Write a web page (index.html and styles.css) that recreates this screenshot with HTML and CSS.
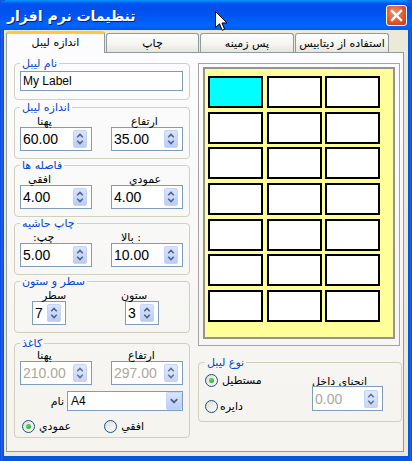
FILE: index.html
```html
<!DOCTYPE html>
<html lang="fa">
<head>
<meta charset="utf-8">
<title>تنظیمات نرم افزار</title>
<link rel="stylesheet" href="styles.css">
</head>
<body>
<div class="window">
  <div class="titlebar">
    <span class="title">تنظیمات نرم افزار</span>
    <span class="close">
      <svg width="21" height="21" viewBox="0 0 21 21"><path d="M6 6 L15 15 M15 6 L6 15" stroke="#fff" stroke-width="2.4" stroke-linecap="square"/></svg>
    </span>
  </div>
  <div class="client">
    <div class="tabs">
      <div class="tab active">اندازه لیبل</div>
      <div class="tab t2">چاپ</div>
      <div class="tab t3">پس زمینه</div>
      <div class="tab t4">استفاده از دیتابیس</div>
    </div>
    <div class="panel">
      <div class="left">
        <fieldset class="grp g-name">
          <legend>نام لیبل</legend>
          <div class="textbox">My Label</div>
        </fieldset>

        <fieldset class="grp g-spin g2">
          <legend>اندازه لیبل</legend>
          <div class="pair">
            <div class="field"><div class="lab l-w">پهنا</div>
              <div class="spin"><span class="val">60.00</span><span class="spinbtn"><svg width="13" height="18" viewBox="0 0 13 18"><path d="M3.5 7 L6.5 4 L9.5 7 M3.5 11 L6.5 14 L9.5 11" fill="none" stroke="#4D6185" stroke-width="1.6"/></svg></span></div></div>
            <div class="field"><div class="lab l-h">ارتفاع</div>
              <div class="spin"><span class="val">35.00</span><span class="spinbtn"><svg width="13" height="18" viewBox="0 0 13 18"><path d="M3.5 7 L6.5 4 L9.5 7 M3.5 11 L6.5 14 L9.5 11" fill="none" stroke="#4D6185" stroke-width="1.6"/></svg></span></div></div>
          </div>
        </fieldset>

        <fieldset class="grp g-spin g3">
          <legend>فاصله ها</legend>
          <div class="pair">
            <div class="field"><div class="lab l-hz">افقي</div>
              <div class="spin"><span class="val">4.00</span><span class="spinbtn"><svg width="13" height="18" viewBox="0 0 13 18"><path d="M3.5 7 L6.5 4 L9.5 7 M3.5 11 L6.5 14 L9.5 11" fill="none" stroke="#4D6185" stroke-width="1.6"/></svg></span></div></div>
            <div class="field"><div class="lab l-vt">عمودي</div>
              <div class="spin"><span class="val">4.00</span><span class="spinbtn"><svg width="13" height="18" viewBox="0 0 13 18"><path d="M3.5 7 L6.5 4 L9.5 7 M3.5 11 L6.5 14 L9.5 11" fill="none" stroke="#4D6185" stroke-width="1.6"/></svg></span></div></div>
          </div>
        </fieldset>

        <fieldset class="grp g-spin g4">
          <legend>چاپ حاشیه</legend>
          <div class="pair">
            <div class="field"><div class="lab l-lf">:چپ</div>
              <div class="spin"><span class="val">5.00</span><span class="spinbtn"><svg width="13" height="18" viewBox="0 0 13 18"><path d="M3.5 7 L6.5 4 L9.5 7 M3.5 11 L6.5 14 L9.5 11" fill="none" stroke="#4D6185" stroke-width="1.6"/></svg></span></div></div>
            <div class="field"><div class="lab l-tp">بالا :</div>
              <div class="spin"><span class="val">10.00</span><span class="spinbtn"><svg width="13" height="18" viewBox="0 0 13 18"><path d="M3.5 7 L6.5 4 L9.5 7 M3.5 11 L6.5 14 L9.5 11" fill="none" stroke="#4D6185" stroke-width="1.6"/></svg></span></div></div>
          </div>
        </fieldset>

        <fieldset class="grp g-spin g5">
          <legend>سطر و ستون</legend>
          <div class="pair">
            <div class="field f-row"><div class="lab l-rw">سطر</div>
              <div class="spin small"><span class="val">7</span><span class="spinbtn"><svg width="13" height="18" viewBox="0 0 13 18"><path d="M3.5 7 L6.5 4 L9.5 7 M3.5 11 L6.5 14 L9.5 11" fill="none" stroke="#4D6185" stroke-width="1.6"/></svg></span></div></div>
            <div class="field f-col"><div class="lab l-cl">ستون</div>
              <div class="spin small"><span class="val">3</span><span class="spinbtn"><svg width="13" height="18" viewBox="0 0 13 18"><path d="M3.5 7 L6.5 4 L9.5 7 M3.5 11 L6.5 14 L9.5 11" fill="none" stroke="#4D6185" stroke-width="1.6"/></svg></span></div></div>
          </div>
        </fieldset>

        <fieldset class="grp g6">
          <legend>کاغذ</legend>
          <div class="pair">
            <div class="field"><div class="lab l-pw">پهنا</div>
              <div class="spin disabled"><span class="val">210.00</span><span class="spinbtn"><svg width="13" height="18" viewBox="0 0 13 18"><path d="M3.5 7 L6.5 4 L9.5 7 M3.5 11 L6.5 14 L9.5 11" fill="none" stroke="#5E7196" stroke-width="1.6"/></svg></span></div></div>
            <div class="field"><div class="lab l-ph">ارتفاع</div>
              <div class="spin disabled"><span class="val">297.00</span><span class="spinbtn"><svg width="13" height="18" viewBox="0 0 13 18"><path d="M3.5 7 L6.5 4 L9.5 7 M3.5 11 L6.5 14 L9.5 11" fill="none" stroke="#5E7196" stroke-width="1.6"/></svg></span></div></div>
          </div>
          <div class="namerow">
            <span class="namelab">نام</span>
            <div class="combo"><span class="cval">A4</span><span class="ddbtn"><svg width="15" height="18" viewBox="0 0 15 18"><path d="M4 7 L7.5 10.5 L11 7" fill="none" stroke="#4D6185" stroke-width="2"/></svg></span></div>
          </div>
          <div class="radios">
            <label class="radio r-port"><span class="dot checked"></span><span>عمودي</span></label>
            <label class="radio r-land"><span class="dot"></span><span>افقي</span></label>
          </div>
        </fieldset>
      </div>

      <div class="right">
        <div class="preview">
          <div class="sheet">
            <div class="cell sel"></div><div class="cell"></div><div class="cell"></div>
            <div class="cell"></div><div class="cell"></div><div class="cell"></div>
            <div class="cell"></div><div class="cell"></div><div class="cell"></div>
            <div class="cell"></div><div class="cell"></div><div class="cell"></div>
            <div class="cell"></div><div class="cell"></div><div class="cell"></div>
            <div class="cell"></div><div class="cell"></div><div class="cell"></div>
            <div class="cell"></div><div class="cell"></div><div class="cell"></div>
          </div>
        </div>
        <fieldset class="grp g-type">
          <legend>نوع لیبل</legend>
          <div class="typebody">
            <div class="typeradios">
              <label class="radio r-rect"><span class="dot checked"></span><span>مستطيل</span></label>
              <label class="radio r-circ"><span class="dot"></span><span>دايره</span></label>
            </div>
            <div class="curve">
              <div class="lab l-cv">انحناي داخل</div>
              <div class="spin disabled curvebox"><span class="val">0.00</span><span class="spinbtn"><svg width="13" height="18" viewBox="0 0 13 18"><path d="M3.5 7 L6.5 4 L9.5 7 M3.5 11 L6.5 14 L9.5 11" fill="none" stroke="#5E7196" stroke-width="1.6"/></svg></span></div>
            </div>
          </div>
        </fieldset>
      </div>
    </div>
  </div>
  <svg class="cursor" width="13" height="21" viewBox="0 0 13 21"><path d="M0.5 0.5 L0.5 16.5 L4.5 12.8 L7.2 19.3 L9.6 18.3 L7 12 L12 12 Z" fill="#fff" stroke="#000" stroke-width="1"/></svg>
</div>
</body>
</html>
```
FILE: styles.css
```css
* { box-sizing: border-box; }
html, body { margin: 0; padding: 0; background: #fff; }
body {
  font-family: "DejaVu Sans", sans-serif;
  font-size: 11px;
  color: #000;
}

.window {
  position: relative;
  width: 412px;
  height: 461px;
  background: linear-gradient(90deg, #0831D9 0, #166AEE 1px, #0855DD 3px, #0855DD 409px, #166AEE 411px, #0831D9 412px);
  overflow: hidden;
}

.titlebar {
  height: 30px;
  display: flex;
  align-items: center;
  padding: 0 5px 0 7px;
  border-radius: 7px 7px 0 0;
  background: linear-gradient(#0997FF 0%, #0053EE 12%, #0050EE 35%, #0058F2 60%, #0066FF 85%, #0058E8 100%);
}
.title {
  color: #fff;
  font-weight: bold;
  font-size: 14px;
  padding-top: 1px;
  text-shadow: 1px 1px 0 #0A1A80;
}
.close {
  margin-left: auto;
  width: 21px;
  height: 21px;
  border: 1px solid #fff;
  border-radius: 3px;
  background: radial-gradient(circle at 40% 35%, #F2936F 0%, #E2562C 55%, #C23A14 100%);
  display: flex;
  align-items: center;
  justify-content: center;
}
.close svg { display: block; margin: -1px; }

.client {
  margin: 0 4px;
  height: 426px;
  background: #ECE9D8;
  padding: 1px 4px 4px 2px;
}

.tabs {
  display: flex;
  align-items: flex-end;
  height: 22px;
}
.tab {
  height: 19px;
  margin: 0 0 1px 1px;
  border: 1px solid #919B9C;
  border-bottom: none;
  border-radius: 3px 3px 0 0;
  background: linear-gradient(#FFFFFF, #F3F3EF 60%, #E6E5DE);
  text-align: center;
  line-height: 18px;
  padding-top: 1px;
  white-space: nowrap;
}
.tab.active {
  position: relative;
  z-index: 1;
  width: 99px;
  height: 22px;
  margin: 0;
  border-top: 3px solid #FFC83C;
  background: #FCFCFE;
  line-height: 18px;
  padding-top: 0;
}
.tab.t2 { width: 93px; }
.tab.t3 { width: 94px; }
.tab.t4 { width: 94px; }

.panel {
  height: 400px;
  margin-top: -1px;
  border: 1px solid #919B9C;
  background: linear-gradient(#FCFCFE, #F4F3EE);
  display: flex;
  gap: 8px;
  padding: 4px 1px 0 7px;
}

.left {
  width: 176px;
  display: flex;
  flex-direction: column;
}
.right {
  width: 204px;
  display: flex;
  flex-direction: column;
}

.grp {
  margin: 0;
  min-width: 0;
  border: 1px solid #D0D0BF;
  border-radius: 4px;
  padding: 0 6px 7px 5px;
}
.grp legend {
  padding: 0 2px;
  line-height: 13px;
  font-size: 11px;
  color: #0046D5;
}

.g-name { padding-bottom: 8px; }
.textbox {
  margin-top: 1px;
  height: 20px;
  border: 1px solid #7F9DB9;
  background: #fff;
  font-family: "Liberation Sans", sans-serif;
  font-size: 12px;
  line-height: 18px;
  padding-left: 2px;
}
.g2 { margin-top: 1px; }
.g3, .g4, .g5 { margin-top: 0; }
.g6 { margin-top: 4px; padding-bottom: 4px; }

.pair {
  display: flex;
  justify-content: space-between;
}
.field { width: 72px; }
.lab {
  line-height: 15px;
  height: 12px;
  white-space: nowrap;
}
.l-w  { padding-left: 17px; }
.l-h  { padding-left: 20px; }
.l-hz { padding-left: 8px; }
.l-vt { padding-left: 18px; }
.l-lf { padding-left: 13px; }
.l-tp { padding-left: 10px; }
.l-rw { padding-left: 22px; }
.l-cl { padding-left: 10px; }
.l-pw { padding-left: 17px; }
.l-ph { padding-left: 17px; }
.g6 .lab { margin-top: -2px; }

.spin {
  margin-top: 1px;
  height: 24px;
  border: 1px solid #7F9DB9;
  background: #fff;
  display: flex;
  align-items: center;
  padding-left: 2px;
}
.spin .val {
  flex: 1;
  font-family: "Liberation Sans", sans-serif;
  font-size: 14px;
  line-height: 16px;
}
.spinbtn {
  width: 14px;
  height: 18px;
  margin-right: 4px;
  border: 1px solid #C3D3F9;
  border-radius: 2px;
  background: linear-gradient(#D9E4FD, #BACCF6);
  display: flex;
  align-items: center;
  justify-content: center;
}
.spinbtn svg { display: block; }
.spin.small { width: 34px; }
.f-row .spin { margin-left: 12px; }
.f-col .spin { margin-left: 14px; }
.spin.disabled .val { color: #ACA899; }
.spin.disabled .spinbtn {
  background: linear-gradient(#E1E9FC, #C7D5F6);
}

.namerow {
  margin-top: 6px;
  display: flex;
  align-items: center;
  justify-content: flex-end;
  gap: 3px;
}
.combo {
  width: 116px;
  height: 20px;
  border: 1px solid #7F9DB9;
  background: #fff;
  display: flex;
  align-items: center;
  padding-left: 3px;
}
.cval {
  flex: 1;
  font-family: "Liberation Sans", sans-serif;
  font-size: 12px;
}
.ddbtn {
  width: 16px;
  height: 18px;
  border: 1px solid #C3D3F9;
  border-radius: 2px;
  background: linear-gradient(#D9E4FD, #BACCF6);
  display: flex;
  align-items: center;
  justify-content: center;
}

.radios {
  margin-top: 8px;
  height: 14px;
  display: flex;
  align-items: center;
}
.radio {
  display: flex;
  align-items: center;
  gap: 4px;
  height: 14px;
  white-space: nowrap;
}
.r-port { margin-left: 2px; }
.r-land { margin-left: 33px; }
.dot {
  width: 13px;
  height: 13px;
  border: 1px solid #1C5180;
  border-radius: 50%;
  background: linear-gradient(135deg, #DCDCD7, #FFFFFF);
  display: flex;
  align-items: center;
  justify-content: center;
}
.dot.checked::after {
  content: "";
  width: 5px;
  height: 5px;
  border-radius: 50%;
  background: radial-gradient(circle at 35% 35%, #62D662, #21A121);
}

.preview {
  margin-top: 6px;
  width: 202px;
  height: 283px;
  border: 1px solid #A5A39A;
  padding: 3px 4px 0 4px;
}
.sheet {
  width: 192px;
  height: 272px;
  background: #FFFF99;
  border: 2px solid #949494;
  padding: 7px 0 0 3px;
  display: grid;
  grid-template-columns: repeat(3, 55px);
  grid-auto-rows: 32px;
  column-gap: 3.5px;
  row-gap: 3.7px;
  align-content: start;
}
.cell {
  border: 2px solid #000;
  background: #fff;
}
.cell.sel { background: #00FFFF; }

.g-type {
  margin-top: 10px;
  padding: 0 6px 8px 6px;
}
.typebody {
  display: flex;
}
.typeradios {
  width: 107px;
  display: flex;
  flex-direction: column;
}
.r-rect { margin-top: 4px; }
.r-circ { margin-top: 12px; gap: 2px; }
.curve { display: flex; flex-direction: column; }
.l-cv { margin-top: 5px; }
.curvebox { width: 71px; height: 25px; margin-top: 0; }

.cursor {
  position: absolute;
  left: 215px;
  top: 11px;
}
```
